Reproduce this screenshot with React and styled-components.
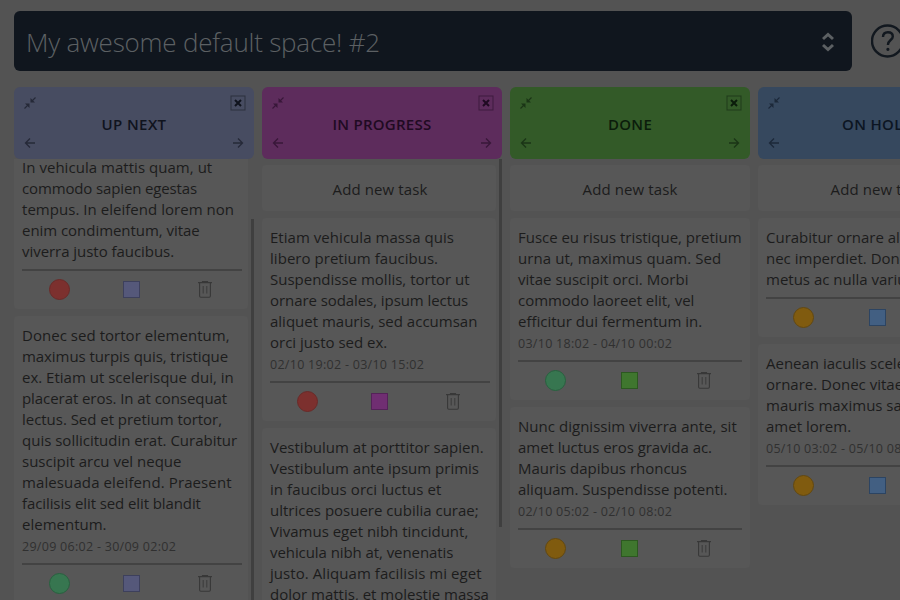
import React from "react";
import styled, { createGlobalStyle } from "styled-components";

const Global = createGlobalStyle`
  * { box-sizing: border-box; }
  body { margin: 0; background: #535353; overflow: hidden; }
`;
const Page = styled.main`
  width: 900px;
  height: 600px;
  overflow: hidden;
  padding: 11px 0 0 14px;
  display: flex;
  flex-direction: column;
  gap: 16px;
  background: #535353;
  color: #1c1c1c;
  font-family: "Open Sans", "Noto Sans", sans-serif;
`;
const TopBar = styled.header`
  display: flex;
  align-items: center;
  gap: 19px;
  width: 930px;
  flex: none;
`;
const SpaceSelect = styled.div`
  width: 838px;
  height: 60px;
  padding: 1px 18px 0 12px;
  border-radius: 6px;
  background: #10161e;
  color: #5c6063;
  display: flex;
  align-items: center;
  justify-content: space-between;
`;
const SpaceName = styled.span`
  font-size: 26px;
  font-weight: 300;
  letter-spacing: -0.22px;
  white-space: pre;
`;
const Board = styled.div`
  display: flex;
  gap: 8px;
  height: 513px;
  width: 1000px;
`;
const Column = styled.section`
  width: 240px;
  display: flex;
  flex-direction: column;
`;
const ColumnHeader = styled.div`
  height: 71.5px;
  flex: none;
  padding: 8px 8px 10px 8px;
  border-radius: 6px;
  background: ${(p) => p.$bg};
  color: ${(p) => p.$ink};
  display: grid;
  grid-template-columns: 16px 1fr 16px;
  grid-template-rows: 16px 1fr 12px;
  align-items: center;
  justify-items: center;
`;
const ColumnTitle = styled.h2`
  grid-column: 1 / 4;
  margin: 0;
  font-size: 15px;
  line-height: 20px;
  font-weight: 600;
  letter-spacing: ${(p) => p.$track}px;
  white-space: nowrap;
`;
const Glyph = styled.svg`
  display: block;
  grid-column: ${(p) => p.$col || "auto"};
  opacity: ${(p) => p.$fade || 1};
`;
const Body = styled.div`
  flex: 1;
  min-height: 0;
  overflow: hidden;
  display: flex;
  justify-content: space-between;
`;
const CardList = styled.div`
  width: ${(p) => (p.$wide ? 240 : 236)}px;
  padding: 0 ${(p) => (p.$wide ? 0 : 2)}px 0 0;
  margin-top: ${(p) => p.$shift}px;
  display: flex;
  flex-direction: column;
  gap: 7px;
`;
const Thumb = styled.div`
  width: 3px;
  height: ${(p) => p.$length}px;
  margin-top: ${(p) => p.$top}px;
  background: #3f3f3f;
`;
const Card = styled.article`
  flex: none;
  padding: 9px ${(p) => (p.$wide ? 8 : 6)}px 9px 8px;
  border-radius: 4px;
  background: #575757;
`;
const AddCard = styled(Card)`
  height: 46px;
  padding: 2px ${(p) => (p.$wide ? 0 : 0)}px 0 ${(p) => (p.$wide ? 0 : 2)}px;
  display: flex;
  align-items: center;
  justify-content: center;
  font-size: 15px;
  letter-spacing: 0.1px;
  white-space: nowrap;
`;
const Line = styled.div`
  height: 21px;
  font-size: 15px;
  line-height: 21px;
  letter-spacing: ${(p) => p.$track || 0}px;
  white-space: nowrap;
`;
const Dates = styled(Line)`
  font-size: 12.5px;
  letter-spacing: 0.28px;
  padding-top: 1px;
  color: #303030;
`;
const Rule = styled.div`
  height: 2px;
  margin-top: 7px;
  background: #434343;
`;
const Actions = styled.div`
  height: 36px;
  padding: 2px 0 0;
  margin-bottom: -7px;
  display: grid;
  grid-template-columns: repeat(3, 1fr);
  align-items: center;
  justify-items: center;
`;
const Dot = styled.span`
  width: 21px;
  height: 21px;
  margin-left: 1px;
  border-radius: 50%;
  background: ${(p) => p.$fill};
  border: 1px solid ${(p) => p.$edge};
`;
const Swatch = styled.span`
  width: 17px;
  height: 17px;
  background: ${(p) => p.$fill};
  border: 1px solid ${(p) => p.$edge};
`;

const Collapse = () => (
  <Glyph width="12" height="12" viewBox="0 0 12 12" $fade={0.6}>
    <path d="M7.500 4.500L11.500 .5M4.500 7.500L.5 11.500" fill="none" stroke="currentColor" strokeWidth="1.100" />
    <path d="M6.500 1v4.500h4.500zM1 6.500h4.500V11z" fill="currentColor" />
  </Glyph>
);
const CloseBox = () => (
  <Glyph width="16" height="16" viewBox="0 0 16 16" $col="3">
    <rect x="1" y="1" width="14" height="14" fill="none" stroke="currentColor" opacity=".5" />
    <path d="M5 5l6 6M11 5l-6 6" stroke="currentColor" strokeWidth="2" />
  </Glyph>
);
const Arrow = ({ right }) => (
  <Glyph width="12" height="12" viewBox="0 0 12 12" $col={right ? "3" : "1"} $fade={0.6}>
    <path d={right ? "M1 6h9.500M6 1.500L10.500 6 6 10.500" : "M11 6H1.500M6 1.500L1.500 6 6 10.500"} fill="none" stroke="currentColor" strokeWidth="1.300" />
  </Glyph>
);
const Trash = () => (
  <Glyph width="15" height="17" viewBox="0 0 15 17" fill="none" stroke="#383838" strokeWidth="1.100">
    <path d="M0 1.600h14M4.500 1.500V.6h5v.9M1.600 2v13q0 1.200 1.200 1.200h8.400q1.200 0 1.200-1.200V2" />
    <path d="M5.200 5v7.500M8.800 5v7.500" strokeWidth=".9" />
  </Glyph>
);
const Sorter = () => (
  <Glyph width="12" height="20" viewBox="0 0 12 20" fill="none" stroke="currentColor" strokeWidth="3">
    <path d="M1 7L6 2.500 11 7M1 13l5 4.500L11 13" />
  </Glyph>
);
const Help = () => (
  <Glyph width="35" height="35" viewBox="0 0 35 35" fill="none" stroke="#12181f" strokeWidth="2.400">
    <circle cx="16.500" cy="17" r="15.500" />
    <path d="M12 13q0-4.800 4.900-4.800t4.900 4.300c0 3.700-4.900 3.500-4.900 8.500" />
    <circle cx="16.900" cy="25.300" r="1" fill="#12181f" strokeWidth="1.200" />
  </Glyph>
);

const RED = ["#7c302e", "#6a2a28"];
const GREEN = ["#377650", "#28613f"];
const AMBER = ["#805b0f", "#634810"];

// A line is a string, or [string, extra width in px spread over its letters].
const columns = [
  {
    title: "UP NEXT", track: 0.4, bg: "#474c61", ink: "#10131d", swatch: ["#55587a", "#3d405c"],
    shift: -11, thumb: [60, 400],
    cards: [
      { lines: [["In vehicula mattis quam, ut", 1], ["commodo sapien egestas", -3], ["tempus. In eleifend lorem non", 1], ["enim condimentum, vitae", -1], ["viverra justo faucibus.", -1]], dot: RED },
      { lines: [["Donec sed tortor elementum,", 1], ["maximus turpis quis, tristique", -2], "ex. Etiam ut scelerisque dui, in", ["placerat eros. In at consequat", -2], ["lectus. Sed et pretium tortor,", -1], "quis sollicitudin erat. Curabitur", "suscipit arcu vel neque", ["malesuada eleifend. Praesent", 3], ["facilisis elit sed elit blandit", -3], "elementum."], dates: "29/09 06:02 - 30/09 02:02", dot: GREEN },
    ],
  },
  {
    title: "IN PROGRESS", track: 0.25, bg: "#5d2c5c", ink: "#200a22", swatch: ["#702e72", "#542258"],
    shift: 6, thumb: [0, 368], add: true,
    cards: [
      { lines: [["Etiam vehicula massa quis", 1], ["libero pretium faucibus.", 1], "Suspendisse mollis, tortor ut", ["ornare sodales, ipsum lectus", -2], "aliquet mauris, sed accumsan", "orci justo sed ex."], dates: "02/10 19:02 - 03/10 15:02", dot: RED },
      { lines: ["Vestibulum at porttitor sapien.", "Vestibulum ante ipsum primis", ["in faucibus orci luctus et", 2], "ultrices posuere cubilia curae;", "Vivamus eget nibh tincidunt,", ["vehicula nibh at, venenatis", -2], ["justo. Aliquam facilisis mi eget", 2], "dolor mattis, et molestie massa"], dot: RED },
    ],
  },
  {
    title: "DONE", track: 0.3, bg: "#335a28", ink: "#0b1c0b", swatch: ["#3f762e", "#2c5820"],
    shift: 6, add: true,
    cards: [
      { lines: [["Fusce eu risus tristique, pretium", -1], ["urna ut, maximus quam. Sed", 2], ["vitae suscipit orci. Morbi", 1], ["commodo laoreet elit, vel", -1], "efficitur dui fermentum in."], dates: "03/10 18:02 - 04/10 00:02", dot: GREEN },
      { lines: [["Nunc dignissim viverra ante, sit", 1], ["amet luctus eros gravida ac.", -1], "Mauris dapibus rhoncus", "aliquam. Suspendisse potenti."], dates: "02/10 05:02 - 02/10 08:02", dot: AMBER },
    ],
  },
  {
    title: "ON HOLD", track: 0.3, bg: "#36485e", ink: "#0c1522", swatch: ["#425f82", "#2c4462"],
    shift: 6, add: true,
    cards: [
      { lines: ["Curabitur ornare aliquam,", "nec imperdiet. Donec", "metus ac nulla varius"], dot: AMBER },
      { lines: ["Aenean iaculis scelerisque", "ornare. Donec vitae", "mauris maximus sapien", "amet lorem."], dates: "05/10 03:02 - 05/10 08:02", dot: AMBER },
    ],
  },
];

const TextLine = ({ line }) => {
  const [text, extra] = Array.isArray(line) ? line : [line, 0];
  return <Line $track={extra / text.length}>{text}</Line>;
};

export default function App() {
  return (
    <Page>
      <Global />
      <TopBar>
        <SpaceSelect>
          <SpaceName>My awesome default space! #2</SpaceName>
          <Sorter />
        </SpaceSelect>
        <Help />
      </TopBar>
      <Board>
        {columns.map((c) => (
          <Column key={c.title}>
            <ColumnHeader $bg={c.bg} $ink={c.ink}>
              <Collapse />
              <CloseBox />
              <ColumnTitle $track={c.track}>{c.title}</ColumnTitle>
              <Arrow />
              <Arrow right />
            </ColumnHeader>
            <Body>
              <CardList $wide={!c.thumb} $shift={c.shift}>
                {c.add && <AddCard $wide={!c.thumb}>Add new task</AddCard>}
                {c.cards.map((card, i) => (
                  <Card key={i} $wide={!c.thumb}>
                    {card.lines.map((line, n) => <TextLine key={n} line={line} />)}
                    {card.dates && <Dates>{card.dates}</Dates>}
                    <Rule />
                    <Actions>
                      <Dot $fill={card.dot[0]} $edge={card.dot[1]} />
                      <Swatch $fill={c.swatch[0]} $edge={c.swatch[1]} />
                      <Trash />
                    </Actions>
                  </Card>
                ))}
              </CardList>
              {c.thumb && <Thumb $top={c.thumb[0]} $length={c.thumb[1]} />}
            </Body>
          </Column>
        ))}
      </Board>
    </Page>
  );
}
